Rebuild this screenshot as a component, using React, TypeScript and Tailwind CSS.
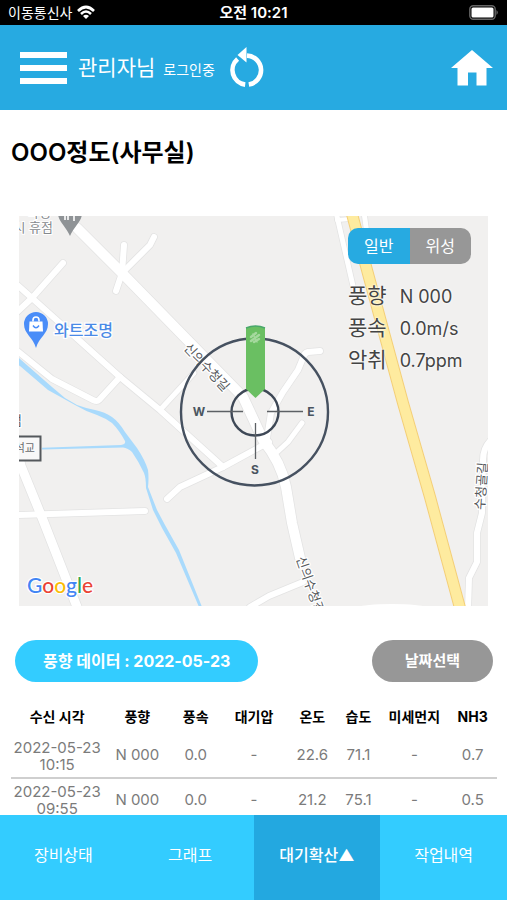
import { useState } from "react";
import clsx from "clsx";

interface Reading {
  date: string;
  time: string;
  direction: string;
  speed: string;
  pressure: string;
  temp: string;
  humidity: string;
  dust: string;
  nh3: string;
}

const READINGS: Reading[] = [
  { date: "2022-05-23", time: "10:15", direction: "N 000", speed: "0.0", pressure: "-", temp: "22.6", humidity: "71.1", dust: "-", nh3: "0.7" },
  { date: "2022-05-23", time: "09:55", direction: "N 000", speed: "0.0", pressure: "-", temp: "21.2", humidity: "75.1", dust: "-", nh3: "0.5" },
];

const COLUMNS = [
  { label: "수신 시각", width: "w-[19%]" },
  { label: "풍향", width: "w-[14%]" },
  { label: "풍속", width: "w-[10%]" },
  { label: "대기압", width: "w-[14%]" },
  { label: "온도", width: "w-[10%]" },
  { label: "습도", width: "w-[9%]" },
  { label: "미세먼지", width: "w-[14%]" },
  { label: "NH3", width: "w-[10%]" },
];

const WIND_INFO = [
  { label: "풍향", value: "N 000" },
  { label: "풍속", value: "0.0m/s" },
  { label: "악취", value: "0.7ppm" },
];

const MAP_TYPES = ["일반", "위성"];

const TABS = ["장비상태", "그래프", "대기확산▲", "작업내역"];

const ROADS = [
  { d: "M105 29 L103 57 L97 75", w: 6 },
  { d: "M135 21 L131 29 L103 57", w: 6 },
  { d: "M44 47 L13 82 L-4 98", w: 6 },
  { d: "M-4 67 L13 82 L101 161 L141 194 L204 251", w: 6 },
  { d: "M101 161 L80 184 Q78 186 74 184 L33 163 L-4 133", w: 6 },
  { d: "M141 194 L175 157", w: 5 },
  { d: "M301 135 L289 136 Q285 137 284 142 L279 154 L264 176 L252 197 L248 222", w: 6 },
  { d: "M283 207 L269 226 L256 238", w: 5 },
  { d: "M250 226 L204 251 L161 271 L148 283", w: 6 },
  { d: "M-4 299 L126 295", w: 6 },
  { d: "M284 366 L250 380 L231 391", w: 6 },
  { d: "M472 224 Q464 232 464 244 L463 297 L458 317 L458 346 L450 362 L449 394", w: 6 },
  { d: "M317 -4 L334 70", w: 5 },
  { d: "M318 4 L331 3", w: 4 },
  { d: "M345 -4 L348 18", w: 5 },
  { d: "M-4 222 L2 250 L24 304 L60 396", w: 9 },
  { d: "M58 12 L103 57 L224 181 L244 224 Q262 246 267 271 L273 307 L281 342", w: 10 },
];

function StatusBar() {
  return (
    <div className="grid h-[25px] shrink-0 grid-cols-3 items-center bg-black px-2 text-white">
      <div className="flex items-center gap-1 text-[14px] leading-5">
        <span>이동통신사</span>
        <svg viewBox="0 0 20 15" className="h-[15px] w-5" aria-hidden="true">
          <path d="M2 6 Q10 -2 18 6" fill="none" stroke="#fff" strokeWidth="2.6" />
          <path d="M5 9 Q10 4 15 9" fill="none" stroke="#fff" strokeWidth="2.5" />
          <path d="M10 14 L7 11 Q10 8.6 13 11 Z" fill="#fff" />
        </svg>
      </div>
      <span className="text-center text-[15px] leading-5 font-semibold">오전 10:21</span>
      <svg viewBox="0 0 30 15" className="h-[15px] w-[30px] justify-self-end" aria-hidden="true">
        <rect x="0.8" y="0.8" width="25.4" height="13.4" rx="3.5" fill="none" stroke="#666" strokeWidth="1.4" />
        <rect x="2.500" y="2.500" width="22" height="10" rx="1.5" fill="#fff" />
        <path d="M27.500 5 Q30 7.5 27.500 10 Z" fill="#777" />
      </svg>
    </div>
  );
}

function Header() {
  return (
    <header className="flex h-[85px] shrink-0 items-center bg-[#27aae1] pr-[14px] pl-5 text-white">
      <button type="button" aria-label="메뉴" className="flex w-[47px] flex-col gap-[7px]">
        <span className="h-[6px] w-full bg-white" />
        <span className="h-[6px] w-full bg-white" />
        <span className="h-[6px] w-full bg-white" />
      </button>
      <p className="ml-[11px] flex items-baseline gap-2">
        <span className="text-[21px]">관리자님</span>
        <span className="text-[14px]">로그인중</span>
      </p>
      <button type="button" aria-label="새로고침" className="ml-[14px]">
        <svg viewBox="0 0 36 42" className="h-[42px] w-9">
          <g fill="none" stroke="#fff" strokeWidth="4.6">
            <path d="M18 8.6 A14.6 14.6 0 0 1 19.8 37.6" />
            <path d="M16.2 37.6 A14.6 14.6 0 0 1 8.6 12" />
          </g>
          <path d="M8.5 8 L17.5 0 V15.5 Z" fill="#fff" />
        </svg>
      </button>
      <a href="#home" aria-label="홈" className="ml-auto">
        <svg viewBox="0 0 42 36" className="h-9 w-[42px]">
          <path d="M21 0 L42 18 H35.5 V35.5 H25.5 V22.5 H17 V35.5 H6.5 V18 H0 Z" fill="#fff" />
        </svg>
      </a>
    </header>
  );
}

function Compass() {
  return (
    <g>
      <circle cx="235.500" cy="196" r="73.500" fill="none" stroke="#465160" strokeWidth="2.4" />
      <circle cx="236" cy="196" r="23.5" fill="none" stroke="#3e4856" strokeWidth="2.4" />
      <path d="M188 195.500 H224 M248 195.500 H284 M236.500 207 V243" stroke="#5c6064" strokeWidth="1.3" />
      <g fill="#4a5560" fontSize="12" fontWeight="700" textAnchor="middle">
        <text x="180" y="200">W</text>
        <text x="292" y="200">E</text>
        <text x="236" y="258">S</text>
      </g>
      <path d="M227 112 Q236.500 108 246 112 V173 L236.500 182 L227 173 Z" fill="#6abf62" />
      <path d="M227 112 Q236.500 108 246 112" fill="none" stroke="#4aa86c" strokeWidth="1.5" />
      <g fill="none" stroke="#a5d99e" strokeWidth="2.4" strokeLinecap="round">
        <path d="M232 121 L237 117 M232 125 L240 119 M235 126 L240 123" />
        <path d="M234 118 L238 126" strokeWidth="1.4" />
      </g>
    </g>
  );
}

function MapCanvas() {
  return (
    <svg viewBox="0 0 469 390" className="block h-auto w-full overflow-hidden bg-[#f1f0ef]" role="img" aria-label="지도">
      <g fill="none" strokeLinecap="round" strokeLinejoin="round">
        {ROADS.map((road) => (
          <path key={road.d} d={road.d} stroke="#e3e3e3" strokeWidth={road.w + 1.5} />
        ))}
        {ROADS.map((road) => (
          <path key={road.d} d={road.d} stroke="#fff" strokeWidth={road.w} />
        ))}
      </g>
      <ellipse cx="373" cy="391" rx="32" ry="3" fill="#fff" />

      <path
        d="M-1 141 L1 143 L33 171 L46 182 L58 189 Q66 192 76 194 Q86 196 93 201 Q100 206 106 216 L118 232 Q126 244 129 254 Q130 262 129 271 L138 294 L146 309 L160 334 L183 391 L180 391 L157 337 L143 312 L134 294 L127 272 Q127 262 125 257 Q120 246 113 236 Q109 232 104 231.500 L23 233.500 V231.800 L102 229 Q107 228 106 225 Q100 214 93 207 Q86 202 78 199 Q66 195 56 189 L29 174 L1 150 L-1 149 Z"
        fill="#a9dafc"
      />

      <g fill="none" strokeLinejoin="round">
        <path d="M333 -2 L348 54 L384 187 L411 281 L441 392" stroke="#f4cf78" strokeWidth="12" />
        <path d="M333 -2 L348 54 L384 187 L411 281 L441 392" stroke="#feeb9f" strokeWidth="10" />
      </g>

      {/* street and place names */}
      <g fill="#55585c" fontSize="13" stroke="#fff" strokeWidth="2.5" strokeLinejoin="round" paintOrder="stroke">
        <text transform="translate(188 151) rotate(47)" textAnchor="middle" y="5">신의수청길</text>
        <text transform="translate(278 342) rotate(71)" y="1">신의수청길</text>
        <text transform="translate(462 270) rotate(-86)" textAnchor="middle" y="5">수청골길</text>
        <text x="-9" y="209">점</text>
      </g>
      <g fill="#85898d" fontSize="13" stroke="#fff" strokeWidth="2" paintOrder="stroke">
        <text x="32" y="1" textAnchor="end">수 작명</text>
        <text x="34" y="16" textAnchor="end">시 휴점</text>
      </g>

      <rect x="-4" y="220.5" width="25.500" height="24" fill="#f8f8f8" stroke="#54585c" strokeWidth="2" />
      <text x="16" y="236" textAnchor="end" fontSize="11" fill="#686b6e">석교</text>

      <path d="M39 -3 A12 12 0 0 1 63 -3 C63 6 55 10 51 20 C47 10 39 6 39 -3 Z" fill="#8f9396" />
      <path d="M46 -4 V4 M49 -4 V4 M55 -4 V5" stroke="#fff" strokeWidth="1.6" />

      <path d="M5 108 A12 12 0 0 1 29 108 C29 118 20 121 17 132 C14 121 5 118 5 108 Z" fill="#4a8df8" />
      <path d="M10.500 105.500 H23.500 L24 115.500 H10 Z" fill="#fff" />
      <path d="M14 105.500 V104 A3 3 0 0 1 20 104 V105.500" fill="none" stroke="#fff" strokeWidth="1.6" />
      <path d="M14 109.500 Q17 114 20 109.500" fill="none" stroke="#4a8df8" strokeWidth="1.4" />
      <text x="35" y="120" fontSize="16" fontWeight="500" fill="#4a8ae6" stroke="#fff" strokeWidth="2.5" paintOrder="stroke">
        와트조명
      </text>

      <Compass />

      <text x="8" y="377" fontSize="21" fontWeight="500" stroke="#fff" strokeWidth="2.5" paintOrder="stroke" className="font-[Lato,sans-serif]">
        <tspan fill="#4285f4">G</tspan>
        <tspan fill="#ea4335">o</tspan>
        <tspan fill="#fbbc05">o</tspan>
        <tspan fill="#4285f4">g</tspan>
        <tspan fill="#34a853">l</tspan>
        <tspan fill="#ea4335">e</tspan>
      </text>
    </svg>
  );
}

function MapPanel() {
  const [mapType, setMapType] = useState(MAP_TYPES[0]);

  return (
    <section className="relative mx-[19px] mt-12">
      <MapCanvas />
      <div className="absolute top-3 right-[17px] w-[123px]">
        <div className="flex h-9 overflow-hidden rounded-[10px]">
          {MAP_TYPES.map((type) => (
            <button
              key={type}
              type="button"
              onClick={() => setMapType(type)}
              className={clsx("flex-1 text-[16px] text-white", mapType === type ? "bg-[#27aae1]" : "bg-[#979797]")}
            >
              {type}
            </button>
          ))}
        </div>
        <dl className="mt-4 text-[#444] [text-shadow:0_0_2px_white,0_0_3px_white]">
          {WIND_INFO.map((info) => (
            <div key={info.label} className="flex h-8 items-center gap-[13px] whitespace-nowrap">
              <dt className="text-[21px]">{info.label}</dt>
              <dd className="text-[18px]">{info.value}</dd>
            </div>
          ))}
        </dl>
      </div>
    </section>
  );
}

function DataTable() {
  return (
    <table className="mt-4 w-full table-fixed text-center">
      <thead>
        <tr className="h-9 text-[14px] whitespace-nowrap text-black">
          {COLUMNS.map((col) => (
            <th key={col.label} scope="col" className={clsx("p-0 font-bold", col.width)}>
              {col.label}
            </th>
          ))}
        </tr>
      </thead>
      <tbody className="text-[15px] text-[#7b7b7b]">
        {READINGS.map((row) => (
          <tr key={row.time} className="h-11 border-b-2 border-[#cfcfcf]">
            <td className="p-0 leading-[17px] whitespace-nowrap">
              {row.date}
              <br />
              {row.time}
            </td>
            <td className="p-0">{row.direction}</td>
            <td className="p-0">{row.speed}</td>
            <td className="p-0">{row.pressure}</td>
            <td className="p-0">{row.temp}</td>
            <td className="p-0">{row.humidity}</td>
            <td className="p-0">{row.dust}</td>
            <td className="p-0">{row.nh3}</td>
          </tr>
        ))}
      </tbody>
    </table>
  );
}

function TabBar() {
  const [active, setActive] = useState(TABS[2]);

  return (
    <nav className="grid h-[85px] shrink-0 grid-cols-4 bg-[#33ccff] text-[16px] text-white">
      {TABS.map((tab) => (
        <button
          key={tab}
          type="button"
          onClick={() => setActive(tab)}
          className={clsx("pb-[6px]", active === tab && "bg-[#23a8e0] font-medium")}
        >
          {tab}
        </button>
      ))}
    </nav>
  );
}

export default function App() {
  return (
    <div className="flex h-screen flex-col bg-white font-[Inter,'Noto_Sans_CJK_KR',sans-serif]">
      <StatusBar />
      <Header />
      <main className="min-h-0 flex-1 overflow-hidden">
        <h1 className="mt-7 ml-[11px] text-[24px] leading-[30px] font-semibold text-black">OOO정도(사무실)</h1>
        <MapPanel />
        <section className="pt-[34px] pr-[10px] pl-[11px]">
          <div className="flex items-center justify-between px-1 font-bold text-white">
            <h2 className="rounded-full bg-[#33ccff] px-7 text-[16px] leading-[42px]">풍향 데이터 : 2022-05-23</h2>
            <button type="button" className="h-[42px] rounded-full bg-[#979797] px-[33px] text-[15px]">
              날짜선택
            </button>
          </div>
          <DataTable />
        </section>
      </main>
      <TabBar />
    </div>
  );
}
